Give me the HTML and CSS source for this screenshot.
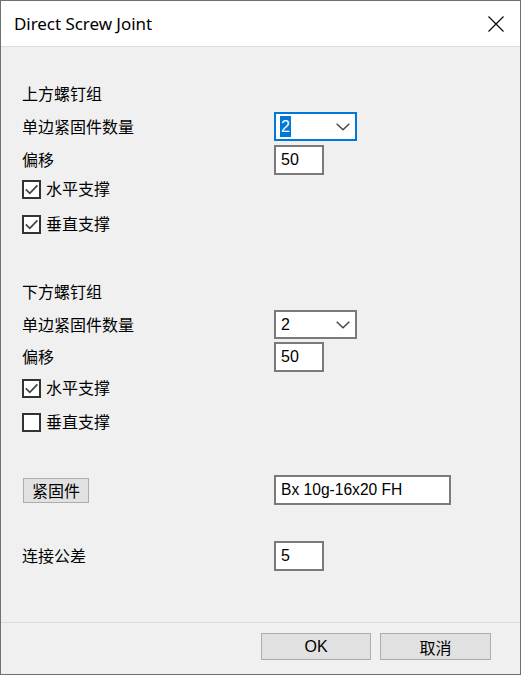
FILE: index.html
```html
<!DOCTYPE html>
<html lang="zh">
<head>
<meta charset="utf-8">
<title>Direct Screw Joint</title>
<link rel="stylesheet" href="styles.css">
</head>
<body>
<div class="window">
  <div class="titlebar">
    <span class="title">Direct Screw Joint</span>
    <svg class="close" width="16" height="16" viewBox="0 0 16 16"><path d="M0.5 0.5 L15.5 15.5 M15.5 0.5 L0.5 15.5" stroke="#000" stroke-width="1.1" fill="none"/></svg>
  </div>
  <div class="content">
    <div class="row heading first">上方螺钉组</div>
    <div class="row field combo-row gap-8">
      <span class="label">单边紧固件数量</span>
      <div class="combo focused"><span class="value selected">2</span><svg class="chev" width="14" height="8" viewBox="0 0 14 8"><path d="M0.7 0.7 L7 6.8 L13.3 0.7" stroke="#444" stroke-width="1.4" fill="none"/></svg></div>
    </div>
    <div class="row field text-row gap-4">
      <span class="label">偏移</span>
      <div class="textbox small">50</div>
    </div>
    <div class="row check-row gap-4">
      <span class="checkbox checked"><svg width="15" height="15" viewBox="0 0 15 15"><path d="M1.8 7.4 L5.8 11.4 L13.4 3.4" stroke="#444" stroke-width="1.7" fill="none"/></svg></span>
      <span class="label">水平支撑</span>
    </div>
    <div class="row check-row gap-15">
      <span class="checkbox checked"><svg width="15" height="15" viewBox="0 0 15 15"><path d="M1.8 7.4 L5.8 11.4 L13.4 3.4" stroke="#444" stroke-width="1.7" fill="none"/></svg></span>
      <span class="label">垂直支撑</span>
    </div>

    <div class="row heading gap-46">下方螺钉组</div>
    <div class="row field combo-row gap-8">
      <span class="label">单边紧固件数量</span>
      <div class="combo"><span class="value">2</span><svg class="chev" width="14" height="8" viewBox="0 0 14 8"><path d="M0.7 0.7 L7 6.8 L13.3 0.7" stroke="#444" stroke-width="1.4" fill="none"/></svg></div>
    </div>
    <div class="row field text-row gap-3">
      <span class="label">偏移</span>
      <div class="textbox small">50</div>
    </div>
    <div class="row check-row gap-6">
      <span class="checkbox checked"><svg width="15" height="15" viewBox="0 0 15 15"><path d="M1.8 7.4 L5.8 11.4 L13.4 3.4" stroke="#444" stroke-width="1.7" fill="none"/></svg></span>
      <span class="label">水平支撑</span>
    </div>
    <div class="row check-row gap-14">
      <span class="checkbox"></span>
      <span class="label">垂直支撑</span>
    </div>

    <div class="row field text-row gap-43">
      <div class="label-cell"><button class="small-btn">紧固件</button></div>
      <div class="textbox wide">Bx 10g-16x20 FH</div>
    </div>
    <div class="row field text-row gap-36">
      <span class="label">连接公差</span>
      <div class="textbox small">5</div>
    </div>
  </div>
  <div class="footer">
    <button class="dlg-btn ok">OK</button>
    <button class="dlg-btn cancel">取消</button>
  </div>
</div>
</body>
</html>
```

FILE: styles.css
```css
* { box-sizing: border-box; }
html, body { margin: 0; padding: 0; background: #f0f0f0; }
body {
  font-family: "Noto Sans CJK SC", "Liberation Sans", sans-serif;
  font-size: 16px;
  color: #000;
}
.window {
  width: 521px;
  height: 675px;
  border: 1px solid #707070;
  background: #f0f0f0;
  display: flex;
  flex-direction: column;
}
.titlebar {
  height: 46px;
  flex: none;
  background: #fff;
  border-bottom: 1px solid #dcdcdc;
  display: flex;
  align-items: center;
  justify-content: space-between;
  padding: 0 16px 1px 13px;
}
.title {
  font-family: "Noto Sans", "Open Sans", sans-serif;
  font-size: 17px;
  color: #000;
  letter-spacing: -0.05px;
}
.close { display: block; margin-top: 1px; }
.content {
  flex: 1;
  padding: 35px 0 0 21px;
}
.row {
  display: grid;
  grid-template-columns: 252px auto;
  align-items: center;
  line-height: 20px;
}
.heading { height: 22px; display: flex; }
.combo-row { height: 29px; }
.text-row { height: 30px; }
.check-row {
  display: flex;
  height: 20px;
  gap: 5px;
}
.gap-3 { margin-top: 3px; }
.gap-4 { margin-top: 4px; }
.gap-6 { margin-top: 6px; }
.gap-8 { margin-top: 8px; }
.gap-14 { margin-top: 14px; }
.gap-15 { margin-top: 15px; }
.gap-36 { margin-top: 36px; }
.gap-43 { margin-top: 43px; }
.gap-46 { margin-top: 46px; }
.label { position: relative; top: -1px; }

.combo {
  width: 83px;
  height: 29px;
  background: #fff;
  border: 2px solid #7a7a7a;
  display: flex;
  align-items: center;
  justify-content: space-between;
  padding: 0 5px 0 4px;
  font-family: "Liberation Sans", sans-serif;
  font-size: 16px;
}
.combo.focused { border-color: #0078d7; }
.value {
  display: inline-block;
  height: 21px;
  line-height: 21px;
  padding: 0 1px;
}
.value.selected { background: #0078d7; color: #fff; }
.chev { display: block; margin-top: 1px; }

.textbox {
  height: 30px;
  background: #fff;
  border: 2px solid #7a7a7a;
  font-family: "Liberation Sans", sans-serif;
  font-size: 16px;
  line-height: 26px;
  padding-left: 5px;
  color: #000;
}
.textbox.small { width: 50px; }
.textbox.wide { width: 177px; font-size: 15.6px; }

.checkbox {
  width: 19px;
  height: 19px;
  flex: none;
  border: 2px solid #333;
  background: #fff;
  display: flex;
  align-items: center;
  justify-content: center;
}
.checkbox svg { display: block; }

.label-cell { display: flex; padding-left: 1px; }
.small-btn {
  width: 66px;
  height: 25px;
  margin: 0;
  padding: 0;
  background: #e1e1e1;
  border: 1px solid #adadad;
  font-family: "Noto Sans CJK SC", sans-serif;
  font-size: 16px;
  line-height: 22px;
  color: #000;
}

.footer {
  flex: none;
  height: 52px;
  border-top: 1px solid #dcdcdc;
  display: flex;
  justify-content: flex-end;
  align-items: flex-start;
  gap: 9px;
  padding: 10px 29px 0 0;
}
.dlg-btn {
  height: 27px;
  margin: 0;
  padding: 0;
  background: #e1e1e1;
  border: 1px solid #adadad;
  font-size: 16px;
  line-height: 24px;
  color: #000;
}
.dlg-btn.ok { width: 110px; font-family: "Liberation Sans", sans-serif; }
.dlg-btn.cancel { width: 111px; font-family: "Noto Sans CJK SC", sans-serif; }
```
